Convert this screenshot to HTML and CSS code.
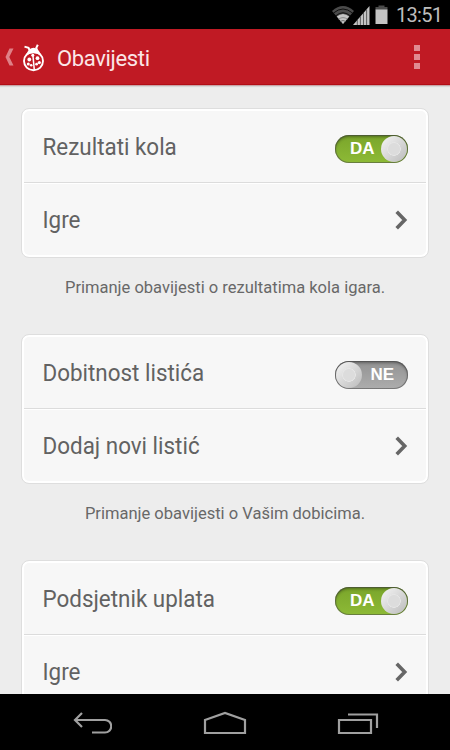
FILE: index.html
```html
<!DOCTYPE html>
<html lang="hr">
<head>
<meta charset="utf-8">
<title>Obavijesti</title>
<link rel="stylesheet" href="styles.css">
</head>
<body>
<div class="statusbar">
  <svg class="status-icons" width="58" height="22" viewBox="0 0 58 22">
    <path fill="#4b4b4b" d="M0 7Q11-3 22 7L11 20Z"/>
    <path fill="#c4c4c4" d="M4.800 12.500Q11 7.500 17.200 12.500L11 20Z"/>
    <g fill="none" stroke="#000" stroke-width=".8"><path d="M1.500 9Q11 1 20.500 9"/><path d="M3.500 12Q11 5.500 18.500 12"/><path d="M6.500 15.200Q11 12 15.500 15.200" stroke="#777"/><path d="M8 17.500Q11 15.500 14 17.500" stroke="#555"/></g>
    <path fill="#c4c4c4" d="M21 21L37.500 2V21Z"/>
    <path stroke="#333" stroke-width=".7" d="M25.300 16V21M28.400 12.500V21M31.500 9V21M34.600 5.500V21"/>
    <path fill="#4b4b4b" d="M46.500 1.500h6v1.500h3v3h-12v-3h3Z"/>
    <path fill="#c4c4c4" d="M43.500 5.500h12V20h-12Z"/>
  </svg>
  <span class="clock">13:51</span>
</div>
<header class="actionbar">
  <svg class="back" width="10" height="18" viewBox="0 0 10 18"><path d="M4.500.5H8.500L4.300 9L8.500 17.500H4.500L.5 9Z"/></svg>
  <svg class="logo" width="22" height="28" viewBox="0 0 22 28">
    <path fill="none" stroke="#fff" stroke-width="2" d="M1.500 2.600L5.500 3.800L7 7M14 7L13.300 3.800L14.800.7"/>
    <path fill="#fff" d="M3.500 10Q6 3.800 10.500 3.800T17.500 10Z"/>
    <ellipse cx="10.500" cy="17" rx="9.500" ry="9.300" fill="#c01b25" stroke="#fff" stroke-width="1.900"/>
    <path fill="#fff" d="M2.500 12.500Q3.500 6.500 10.500 6.500T18.500 12.500Q15 9.300 10.500 9.300T2.500 12.500Z"/>
    <path stroke="#fff" stroke-width="1.500" d="M9.800 10L11.300 26"/>
    <g fill="#fff"><circle cx="9.800" cy="11.300" r="1.500"/><circle cx="6.300" cy="15.500" r="1.900"/><circle cx="14.500" cy="14.200" r="1.900"/><circle cx="5.300" cy="20" r="1.500"/><circle cx="16.300" cy="18.600" r="1.600"/><circle cx="8.200" cy="21.300" r="1.300"/><circle cx="13.600" cy="20.200" r="1.400"/></g>
  </svg>
  <h1>Obavijesti</h1>
  <div class="overflow"><i></i><i></i><i></i></div>
</header>
<main>
  <section class="card">
    <div class="row"><span>Rezultati kola</span><div class="switch on"><b>DA</b><i></i></div></div>
    <div class="row"><span>Igre</span><svg class="chev" width="13" height="20" viewBox="0 0 13 20"><path d="M1.700 1.800L9.700 10L1.700 18.200"/></svg></div>
  </section>
  <p>Primanje obavijesti o rezultatima kola igara.</p>
  <section class="card">
    <div class="row"><span>Dobitnost listića</span><div class="switch off"><i></i><b>NE</b></div></div>
    <div class="row"><span>Dodaj novi listić</span><svg class="chev" width="13" height="20" viewBox="0 0 13 20"><path d="M1.700 1.800L9.700 10L1.700 18.200"/></svg></div>
  </section>
  <p>Primanje obavijesti o Vašim dobicima.</p>
  <section class="card">
    <div class="row"><span>Podsjetnik uplata</span><div class="switch on"><b>DA</b><i></i></div></div>
    <div class="row"><span>Igre</span><svg class="chev" width="13" height="20" viewBox="0 0 13 20"><path d="M1.700 1.800L9.700 10L1.700 18.200"/></svg></div>
  </section>
</main>
<nav>
  <svg width="40" height="24" viewBox="0 0 40 24"><path d="M10 2L3 9L10 16M3 9H33A6 6 0 0 1 33 21.500H20"/></svg>
  <svg width="44" height="24" viewBox="0 0 44 24"><path d="M2 9L22 2L42 9V22H2Z"/></svg>
  <svg width="42" height="24" viewBox="0 0 42 24"><path d="M2 9H34V22H2ZM11 3.500H40V17"/></svg>
</nav>
</body>
</html>
```
FILE: styles.css
```css
* { box-sizing: border-box; }
body { margin: 0; width: 450px; height: 750px; overflow: hidden; display: flex; flex-direction: column; background: #ededed; font-family: Roboto, "Noto Sans", sans-serif; color: #565656; }
.statusbar { height: 29px; flex: none; background: #000; display: flex; justify-content: flex-end; align-items: center; padding: 0 8px 0 0; }
.status-icons { margin: 0 6px 0 0; }
.clock { color: #bdbdbd; font-size: 20px; line-height: 28px; width: 46px; letter-spacing: -.7px; white-space: nowrap; font-weight: 400; padding-top: 1px; }
.actionbar { height: 57px; flex: none; background: #c01a24; border-bottom: 1px solid #c9a5a8; box-shadow: inset 0 -1px #b20d16, 0 1px 1px #d8d8d8; display: flex; align-items: center; padding: 0 30px 0 5px; }
.back { fill: #df8087; }
.logo { margin: 2px 0 0 8px; }
h1 { margin: 3px 0 0 12px; font-size: 22px; line-height: 28px; font-weight: 400; color: #fbe6e7; letter-spacing: -.35px; flex: 1; }
.overflow { display: flex; flex-direction: column; gap: 3px; }
.overflow i { width: 6px; height: 6px; background: #e18a91; }
main { flex: 1; min-height: 0; overflow: hidden; padding: 22px 21px 0; }
.card { height: 150px; border: 1px solid #dedede; border-radius: 8px; background: #f7f7f7; box-shadow: inset 0 0 0 2px #fff; padding: 2px; }
.row { height: 71px; display: flex; align-items: center; justify-content: space-between; padding: 1px 18px 0; font-size: 24px; }
.row + .row { border-top: 1px solid #dcdcdc; box-shadow: inset 0 1px #fff; height: 74px; padding: 1px 18px 0; }
.row span { transform: translateX(.5px) scaleX(.934); transform-origin: left; color: #626262; }
p { margin: 0; height: 76px; padding-top: 19px; text-align: center; font-size: 17px; line-height: 20px; white-space: nowrap; color: #686868; transform: scaleX(.972); }
.switch { width: 73px; height: 28px; border-radius: 14px; display: flex; align-items: center; justify-content: space-between; margin-top: 4px; padding: 0 1px; box-shadow: inset 0 0 0 1px rgba(70,70,70,.5), inset 0 2px 3px rgba(0,0,0,.35); }
.switch b { color: #fff; font: bold 17px/28px "Liberation Sans", sans-serif; }
.switch i { width: 26px; height: 26px; border-radius: 50%; background: radial-gradient(circle, #dcdcdc 0 5.500px, #e6e6e6 6.500px, transparent 7px), linear-gradient(135deg, #f5f5f5, #bbb); }
.on { background: linear-gradient(#7aa52b, #8dba36); }
.on b { margin-left: 14px; }
.off { background: linear-gradient(#929292, #adadad); }
.off b { margin-right: 13px; }
.chev path { fill: none; stroke: #666; stroke-width: 3.600; }
nav { height: 56px; flex: none; background: #000; display: flex; justify-content: space-between; align-items: center; padding: 2px 71px 0 72px; }
nav path { fill: none; stroke: #a0a0a0; stroke-width: 2.200; }
```
